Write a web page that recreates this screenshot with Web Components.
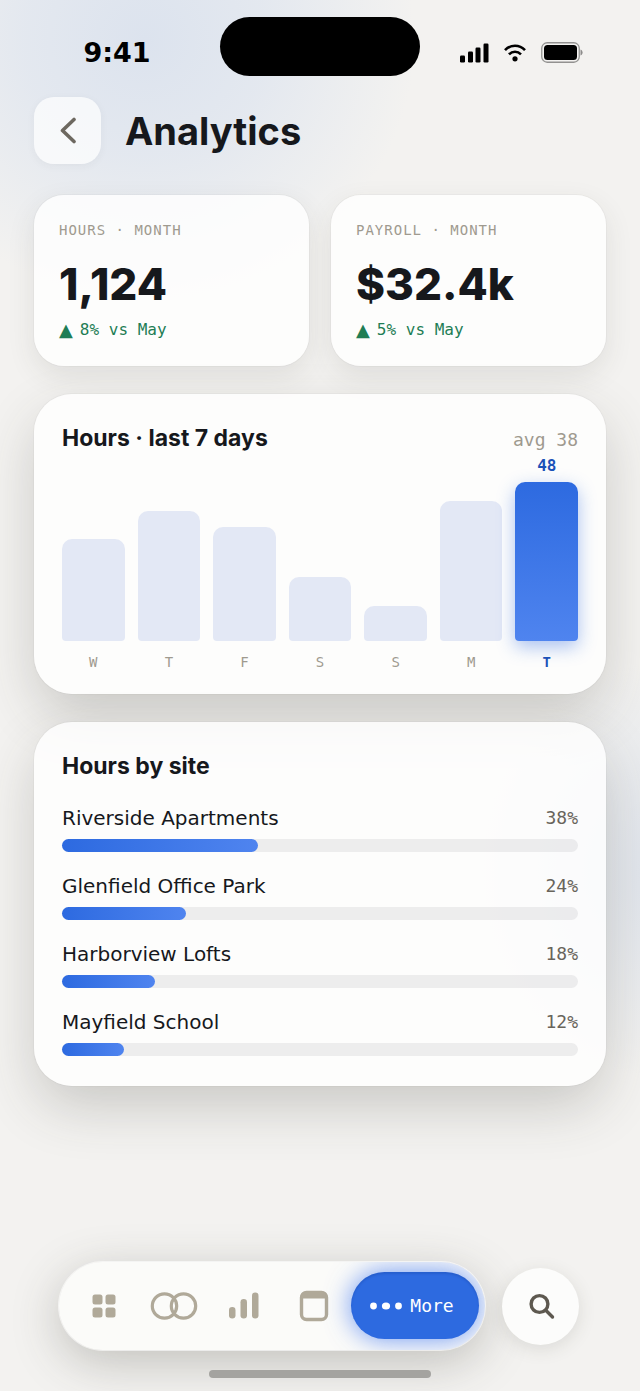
<!DOCTYPE html>
<html lang="en">
<head>
<meta charset="utf-8">
<meta name="viewport" content="width=device-width, initial-scale=1">
<title>Analytics</title>
<style>
  body {
    margin: 0;
    --ink: #16181c;
    --muted: #9f9a8f;
    --soft: #68645b;
    --blue: #2d6ae0;
    --blue-light: #4f84ef;
    --blue-dark: #1c52b8;
    --display: Inter, "Liberation Sans", sans-serif;
    --mono: "DejaVu Sans Mono", "Liberation Mono", monospace;
    color: var(--ink);
    font-family: "DejaVu Sans", sans-serif;
  }
</style>
</head>
<body>
<analytics-page></analytics-page>

<script>
class StatusBar extends HTMLElement {
  constructor() {
    super();
    this._shadowRoot = this.attachShadow({ mode: "open" });
  }

  connectedCallback() {
    this._shadowRoot.innerHTML = `
    <style>
    :host {
      display: grid;
      grid-template-columns: 1fr 200px 1fr;
      align-items: center;
      padding: 17px 16px 0;
      color: #000;
    }
    .time, .icons {
      padding: 12px 2px 0 0;
    }
    .time {
      text-align: center;
      font-size: 27px;
      font-weight: bold;
      line-height: 32px;
    }
    .island {
      height: 59px;
      border-radius: 30px;
      background: #000;
    }
    .icons {
      display: flex;
      justify-content: center;
      align-items: center;
      gap: 15px;
    }
    svg {
      display: block;
    }
    </style>
    <div class="time">${this.getAttribute("time")}</div>
    <div class="island"></div>
    <div class="icons">
      <svg width="29" height="20" viewBox="0 0 29 20">
        <rect x="0" y="12.5" width="5" height="7" rx="1.2"/>
        <rect x="8" y="8.5" width="5" height="11" rx="1.2"/>
        <rect x="15.5" y="4.5" width="5" height="15" rx="1.2"/>
        <rect x="23.5" y="0.5" width="5" height="19" rx="1.2"/>
      </svg>
      <svg width="22" height="18" viewBox="0 0 22 18" fill="none" stroke="#000" stroke-width="2.6">
        <path d="M1 6.2C6.5 .2 15.5 .2 21 6.2"/>
        <path d="M5 10.3C8.5 6.8 13.5 6.8 17 10.3"/>
        <circle cx="11" cy="14.8" r="2.6" fill="#000" stroke="none"/>
      </svg>
      <svg width="42" height="21" viewBox="0 0 42 21">
        <rect x=".75" y=".75" width="37.5" height="19.5" rx="5.5" fill="none" stroke="#000" stroke-opacity=".4" stroke-width="1.3"/>
        <rect x="3" y="3" width="33" height="15" rx="3.5"/>
        <path d="M39.5 7.5c2.8 1.2 2.8 5 0 6z" fill-opacity=".42"/>
      </svg>
    </div>
    `;
  }
}
customElements.define("status-bar", StatusBar);

class PageHeader extends HTMLElement {
  constructor() {
    super();
    this._shadowRoot = this.attachShadow({ mode: "open" });
  }

  connectedCallback() {
    this._shadowRoot.innerHTML = `
    <style>
    :host {
      display: flex;
      align-items: center;
      gap: 24px;
    }
    button {
      display: grid;
      place-items: center;
      width: 67px;
      height: 67px;
      padding: 0;
      border: 0;
      border-radius: 20px;
      background: rgba(255, 255, 255, 0.7);
      box-shadow: 0 2px 8px rgba(60, 60, 50, 0.05);
      cursor: pointer;
    }
    h1 {
      margin: 0;
      font: 700 38px/48px var(--display);
    }
    </style>
    <button type="button" aria-label="Back">
      <svg width="20" height="28" viewBox="0 0 20 28" fill="none" stroke="#6d6860" stroke-width="3.6" stroke-linecap="round" stroke-linejoin="round">
        <path d="M16 2.500 4.500 13.500 16 24.500"/>
      </svg>
    </button>
    <h1><slot></slot></h1>
    `;
  }
}
customElements.define("page-header", PageHeader);

class StatCard extends HTMLElement {
  constructor() {
    super();
    this._shadowRoot = this.attachShadow({ mode: "open" });
  }

  connectedCallback() {
    this._shadowRoot.innerHTML = `
    <style>
    :host {
      display: flex;
      flex-direction: column;
      padding: 25px 25px 26px;
      border-radius: 30px;
      background: rgba(255, 255, 255, 0.8);
      box-shadow: 0 0 0 1px rgba(120, 120, 110, 0.05), 0 10px 28px rgba(60, 60, 50, 0.1);
    }
    .label {
      color: var(--muted);
      font: 14px/20px var(--mono);
      letter-spacing: 1px;
      text-transform: uppercase;
    }
    .value {
      margin: 20px 0 12px;
      font: 800 44px/48px var(--display);
    }
    .delta {
      display: flex;
      align-items: center;
      gap: 7px;
      color: #1f7d55;
      font: 16px/20px var(--mono);
    }
    .arrow {
      font: 18px/20px "DejaVu Sans", sans-serif;
    }
    </style>
    <div class="label">${this.getAttribute("label")}</div>
    <div class="value">${this.getAttribute("value")}</div>
    <div class="delta"><span class="arrow">▲</span><slot></slot></div>
    `;
  }
}
customElements.define("stat-card", StatCard);

class PanelCard extends HTMLElement {
  constructor() {
    super();
    this._shadowRoot = this.attachShadow({ mode: "open" });
  }

  connectedCallback() {
    this._shadowRoot.innerHTML = `
    <style>
    :host {
      display: block;
      padding: 28px 28px 0;
      border-radius: 38px;
      background: rgba(255, 255, 255, 0.8);
      box-shadow: 0 0 0 1px rgba(120, 120, 110, 0.05), 0 22px 56px -4px rgba(60, 60, 50, 0.24);
    }
    header {
      display: flex;
      justify-content: space-between;
      align-items: baseline;
    }
    h2 {
      margin: 0;
      font: 700 23px/32px var(--display);
    }
    .note {
      color: var(--muted);
      font: 18px/28px var(--mono);
    }
    </style>
    <header>
      <h2>${this.getAttribute("heading")}</h2>
      <span class="note">${this.getAttribute("note") || ""}</span>
    </header>
    <slot></slot>
    `;
  }
}
customElements.define("panel-card", PanelCard);

class BarChart extends HTMLElement {
  constructor() {
    super();
    this._shadowRoot = this.attachShadow({ mode: "open" });
  }

  set days(days) {
    this._days = days;
    this.render();
  }

  render() {
    const columns = this._days
      .map(
        (day) => `
      <div class="column ${day.today ? "today" : ""}">
        <div class="value">${day.today ? day.hours : ""}</div>
        <div class="plot"><div class="bar" style="height: ${day.height}%"></div></div>
        <div class="day">${day.name}</div>
      </div>`
      )
      .join("");

    this._shadowRoot.innerHTML = `
    <style>
    :host {
      display: flex;
      gap: 13px;
      padding-bottom: 22px;
    }
    .column {
      flex: 1;
      text-align: center;
    }
    .value {
      height: 24px;
      margin-bottom: 4px;
      font: 700 16px/24px var(--mono);
    }
    .plot {
      display: flex;
      align-items: flex-end;
      height: 159px;
      margin-bottom: 11px;
    }
    .bar {
      flex: 1;
      border-radius: 10px 10px 4px 4px;
      background: #e3e8f5;
    }
    .day {
      color: var(--muted);
      font: 14px/20px var(--mono);
    }
    .today .value, .today .day {
      color: var(--blue-dark);
    }
    .today .day {
      font-weight: bold;
    }
    .today .bar {
      background: linear-gradient(var(--blue), var(--blue-light));
      box-shadow: 0 6px 18px rgba(45, 106, 224, 0.4);
    }
    </style>
    ${columns}
    `;
  }
}
customElements.define("bar-chart", BarChart);

class SiteRow extends HTMLElement {
  constructor() {
    super();
    this._shadowRoot = this.attachShadow({ mode: "open" });
  }

  connectedCallback() {
    const share = this.getAttribute("share");
    this._shadowRoot.innerHTML = `
    <style>
    :host {
      display: block;
    }
    .text {
      display: flex;
      justify-content: space-between;
      align-items: center;
      margin-bottom: 7px;
      font-size: 20px;
      line-height: 28px;
    }
    .share {
      color: var(--soft);
      font: 18px/28px var(--mono);
    }
    .track {
      height: 13px;
      border-radius: 7px;
      background: rgba(30, 32, 36, 0.07);
    }
    .fill {
      width: ${share}%;
      height: 100%;
      border-radius: inherit;
      background: linear-gradient(90deg, var(--blue), var(--blue-light));
    }
    </style>
    <div class="text">
      <span><slot></slot></span>
      <span class="share">${share}%</span>
    </div>
    <div class="track"><div class="fill"></div></div>
    `;
  }
}
customElements.define("site-row", SiteRow);

class TabBar extends HTMLElement {
  constructor() {
    super();
    this._shadowRoot = this.attachShadow({ mode: "open" });
  }

  connectedCallback() {
    this._shadowRoot.innerHTML = `
    <style>
    :host {
      display: flex;
      justify-content: center;
      align-items: center;
      gap: 17px;
      padding-right: 2px;
    }
    .shell {
      border-radius: 44px;
      box-shadow: 0 0 0 1px rgba(255, 255, 255, 0.6), 0 12px 48px rgba(60, 60, 50, 0.28);
    }
    nav {
      display: flex;
      box-sizing: border-box;
      height: 88px;
      padding: 10px 6px 11px 10px;
      border-radius: 44px;
      overflow: hidden;
      background: #fbfbf9;
    }
    a {
      display: flex;
      justify-content: center;
      align-items: center;
      width: 70px;
      color: #b0a999;
      text-decoration: none;
    }
    a.active {
      gap: 8px;
      box-sizing: border-box;
      width: 128px;
      margin-left: 2px;
      padding-right: 6px;
      border-radius: 34px;
      background: var(--blue);
      box-shadow: inset 0 2px 2px rgba(20, 60, 150, 0.25), 0 0 26px rgba(45, 106, 240, 0.7);
      color: #fff;
      font: 18px/24px var(--mono);
    }
    button {
      display: grid;
      place-items: center;
      width: 77px;
      height: 77px;
      padding: 0;
      border: 0;
      border-radius: 50%;
      background: #fcfcfb;
      box-shadow: 0 4px 18px rgba(60, 60, 50, 0.13);
      cursor: pointer;
    }
    svg {
      display: block;
    }
    </style>
    <div class="shell">
      <nav>
        <a href="#home" aria-label="Home">
          <svg width="24" height="24" viewBox="0 0 24 24" fill="currentColor">
            <rect x=".5" y=".5" width="10" height="10" rx="2.5"/>
            <rect x="13.5" y=".5" width="10" height="10" rx="2.5"/>
            <rect x=".5" y="13.5" width="10" height="10" rx="2.5"/>
            <rect x="13.5" y="13.5" width="10" height="10" rx="2.5"/>
          </svg>
        </a>
        <a href="#crew" aria-label="Crew">
          <svg width="48" height="28" viewBox="0 0 48 28" fill="none" stroke="currentColor" stroke-width="3.2">
            <circle cx="14.5" cy="14" r="12.2"/>
            <circle cx="33.5" cy="14" r="12.2"/>
          </svg>
        </a>
        <a href="#reports" aria-label="Reports">
          <svg width="30" height="28" viewBox="0 0 30 28" fill="currentColor">
            <rect x="0" y="15" width="6.5" height="11.5" rx="3.2"/>
            <rect x="11.5" y="7" width="6.5" height="19.5" rx="3.2"/>
            <rect x="23" y=".5" width="6.5" height="26" rx="3.2"/>
          </svg>
        </a>
        <a href="#calendar" aria-label="Calendar">
          <svg width="30" height="32" viewBox="0 0 30 32">
            <rect x="2.5" y="2.5" width="25" height="27" rx="5" fill="none" stroke="currentColor" stroke-width="3.4"/>
            <path d="M2 8.5V6q0-4 4-4h18q4 0 4 4v2.5z" fill="currentColor"/>
          </svg>
        </a>
        <a class="active" href="#more" aria-current="page">
          <svg width="32" height="8" viewBox="0 0 32 8" fill="currentColor">
            <circle cx="3.5" cy="4" r="3.4"/>
            <ellipse cx="16" cy="4" rx="4.1" ry="3.6"/>
            <circle cx="28.5" cy="4" r="3.4"/>
          </svg>
          <span>More</span>
        </a>
      </nav>
    </div>
    <button type="button" aria-label="Search">
      <svg width="28" height="28" viewBox="0 0 28 28" fill="none" stroke="#5d584f" stroke-width="3.4" stroke-linecap="round">
        <circle cx="12.5" cy="12" r="8.4"/>
        <path d="m19 18.5 6.5 6.5"/>
      </svg>
    </button>
    `;
  }
}
customElements.define("tab-bar", TabBar);

class AnalyticsPage extends HTMLElement {
  constructor() {
    super();
    this._shadowRoot = this.attachShadow({ mode: "open" });
  }

  connectedCallback() {
    this._shadowRoot.innerHTML = `
    <style>
    :host {
      display: flex;
      flex-direction: column;
      min-height: 100vh;
      background:
        radial-gradient(ellipse 270px 260px at 145px 40px, #dce3ee, rgba(221, 228, 239, 0.7) 45%, rgba(226, 231, 239, 0)),
        radial-gradient(ellipse 190px 210px at 105% 870px, #dee3eb, rgba(222, 227, 235, 0)),
        #f3f2f0;
    }
    main {
      display: flex;
      flex-direction: column;
      gap: 28px;
      padding: 21px 34px 40px;
    }
    page-header {
      margin-bottom: 3px;
    }
    .stats {
      display: grid;
      grid-template-columns: 1fr 1fr;
      gap: 22px;
    }
    .sites {
      display: grid;
      gap: 20px;
      padding: 22px 0 30px;
    }
    footer {
      margin-top: auto;
      padding-bottom: 13px;
    }
    .home {
      width: 222px;
      height: 8px;
      margin: 20px auto 0;
      border-radius: 4px;
      background: #a4a3a0;
      position: relative;
    }
    </style>
    <status-bar time="9:41"></status-bar>
    <main>
      <page-header>Analytics</page-header>
      <div class="stats">
        <stat-card label="Hours · Month" value="1,124">8% vs May</stat-card>
        <stat-card label="Payroll · Month" value="$32.4k">5% vs May</stat-card>
      </div>
      <panel-card heading="Hours · last 7 days" note="avg 38">
        <bar-chart></bar-chart>
      </panel-card>
      <panel-card heading="Hours by site">
        <div class="sites">
          <site-row share="38">Riverside Apartments</site-row>
          <site-row share="24">Glenfield Office Park</site-row>
          <site-row share="18">Harborview Lofts</site-row>
          <site-row share="12">Mayfield School</site-row>
        </div>
      </panel-card>
    </main>
    <footer>
      <tab-bar></tab-bar>
      <div class="home"></div>
    </footer>
    `;

    this._shadowRoot.querySelector("bar-chart").days = [
      { name: "W", height: 64 },
      { name: "T", height: 82 },
      { name: "F", height: 72 },
      { name: "S", height: 40 },
      { name: "S", height: 22 },
      { name: "M", height: 88 },
      { name: "T", height: 100, hours: 48, today: true },
    ];
  }
}
customElements.define("analytics-page", AnalyticsPage);
</script>
</body>
</html>
